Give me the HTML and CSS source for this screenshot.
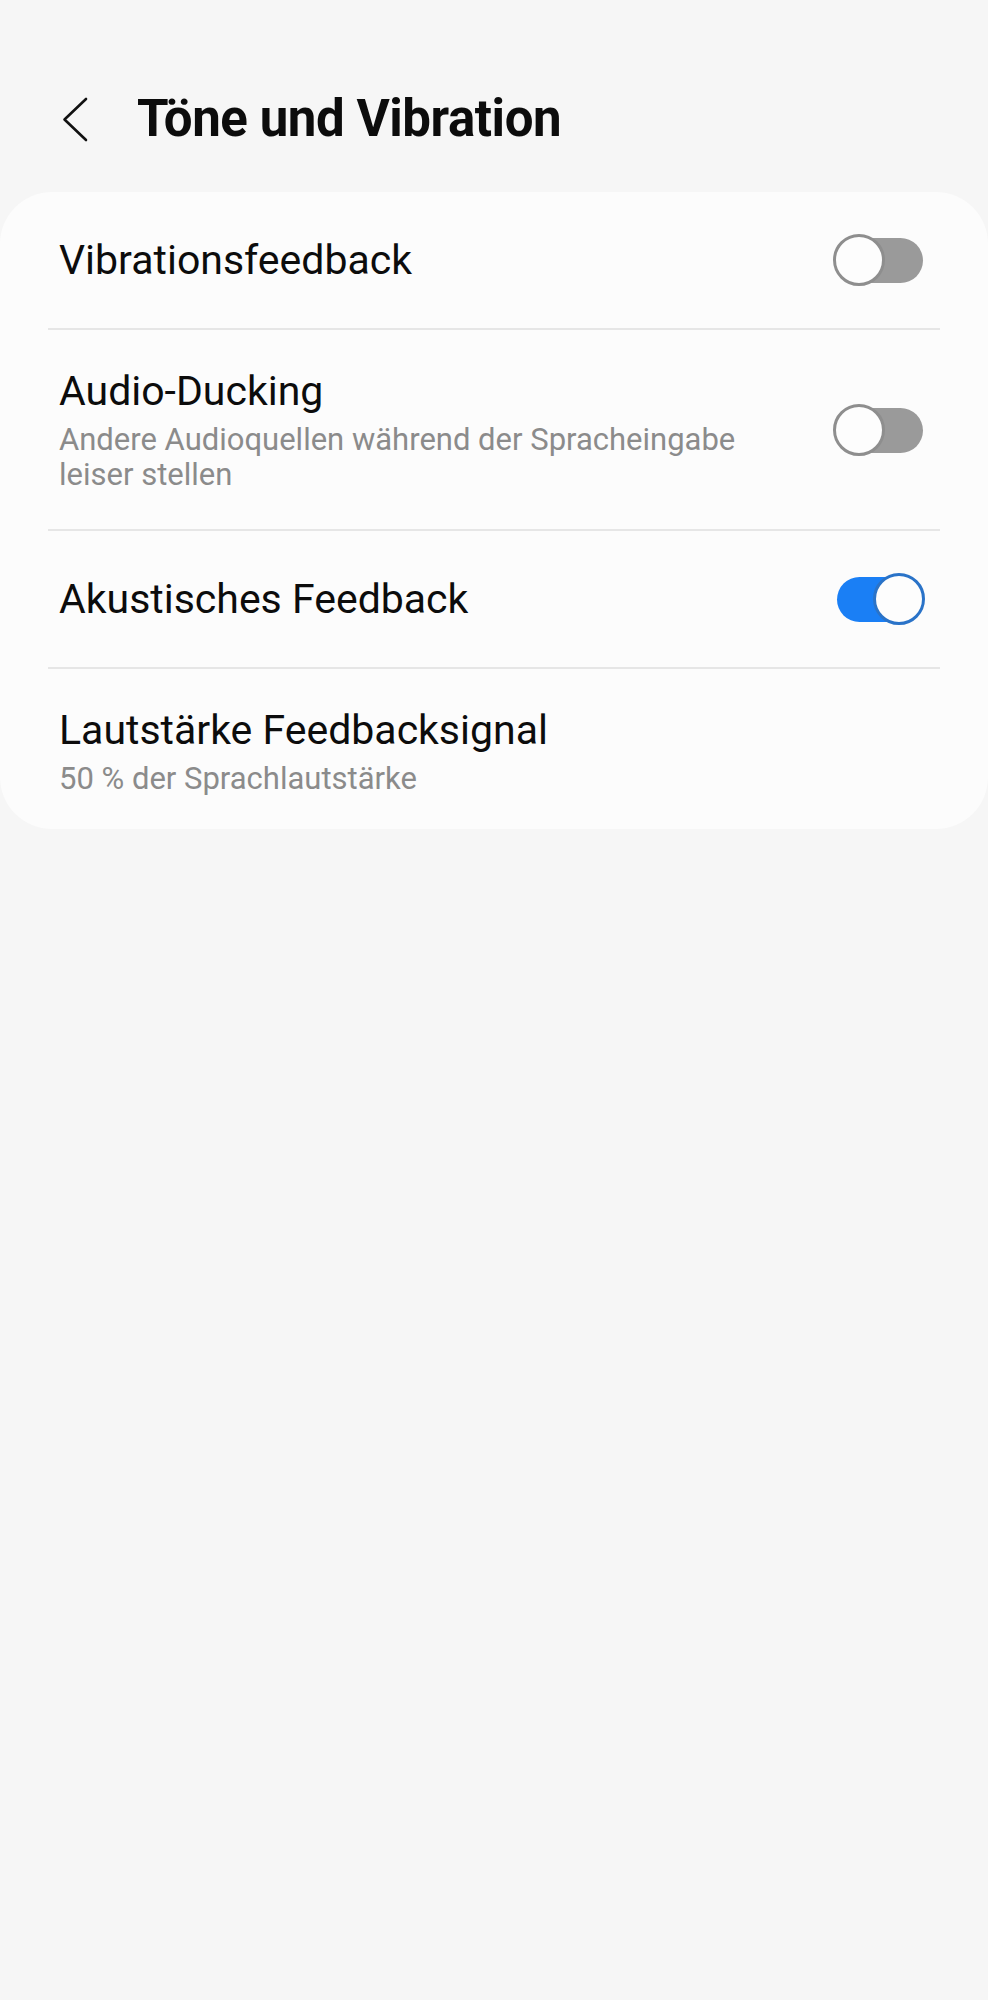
FILE: index.html
```html
<!DOCTYPE html>
<html lang="de">
<head>
    <meta charset="UTF-8">
    <meta name="viewport" content="width=device-width, initial-scale=1.0">
    <title>Töne und Vibration</title>
    <link rel="stylesheet" href="styles.css">
</head>
<body>

    <!-- App bar -->
    <header class="app-bar">
        <button class="back-btn" aria-label="Zurück">
            <svg width="27" height="45" viewBox="0 0 27 45">
                <polyline points="24,2 2.5,22.5 24,43" fill="none" stroke="#111" stroke-width="2.6" stroke-linecap="round" stroke-linejoin="round"/>
            </svg>
        </button>
        <h1 class="page-title">Töne und Vibration</h1>
    </header>

    <!-- Settings list -->
    <main class="settings-card">
        <ul class="pref-list">
            <li class="pref-row">
                <div class="pref-text">
                    <div class="pref-title">Vibrationsfeedback</div>
                </div>
                <label class="switch">
                    <input type="checkbox">
                    <span class="slider"></span>
                </label>
            </li>
            <li class="pref-row">
                <div class="pref-text">
                    <div class="pref-title">Audio-Ducking</div>
                    <div class="pref-summary">Andere Audioquellen während der Spracheingabe leiser stellen</div>
                </div>
                <label class="switch">
                    <input type="checkbox">
                    <span class="slider"></span>
                </label>
            </li>
            <li class="pref-row">
                <div class="pref-text">
                    <div class="pref-title">Akustisches Feedback</div>
                </div>
                <label class="switch">
                    <input type="checkbox" checked>
                    <span class="slider"></span>
                </label>
            </li>
            <li class="pref-row">
                <div class="pref-text">
                    <div class="pref-title">Lautstärke Feedbacksignal</div>
                    <div class="pref-summary">50 % der Sprachlautstärke</div>
                </div>
            </li>
        </ul>
    </main>

</body>
</html>
```

FILE: styles.css
```css
body {
    margin: 0;
    background-color: #f6f6f6;
    font-family: Roboto, "Noto Sans", sans-serif;
    color: #0c0c0c;
}

.app-bar {
    display: flex;
    align-items: center;
    padding: 88px 0 42px 62px;
}

.back-btn {
    display: flex;
    background: none;
    border: none;
    padding: 0;
    margin-right: 48px;
    cursor: pointer;
}

.page-title {
    margin: 0;
    font-size: 51px;
    font-weight: 700;
    line-height: 62px;
    letter-spacing: -0.45px;
}

.settings-card {
    background: #fcfcfc;
    border-radius: 52px;
}

.pref-list {
    list-style: none;
    margin: 0;
    padding: 0 48px;
}

.pref-row {
    display: flex;
    align-items: center;
    box-sizing: border-box;
    min-height: 138px;
    padding: 37px 16px 37px 11px;
    border-bottom: 2px solid #e6e6e6;
}

.pref-row:last-child {
    border-bottom: none;
    padding-bottom: 33px;
}

.pref-text {
    flex: 1;
    margin-right: 60px;
}

.pref-title {
    font-size: 41px;
    line-height: 49px;
}

.pref-summary {
    margin-top: 6px;
    font-size: 31px;
    line-height: 35px;
    color: #8b8b8b;
}

/* toggle switch */
.switch {
    position: relative;
    flex: none;
    width: 91px;
    height: 52px;
}

.switch input { display: none; }

.slider {
    position: absolute;
    left: 4px;
    right: 1px;
    top: 4px;
    bottom: 3px;
    background: #9a9a9a;
    border-radius: 23px;
}

.slider::before {
    content: "";
    position: absolute;
    left: -4px;
    top: -4px;
    width: 52px;
    height: 52px;
    box-sizing: border-box;
    border-radius: 50%;
    background: #fdfdfd;
    border: 3px solid #8e8e8e;
}

.switch input:checked + .slider { background: #1a7ff5; }

.switch input:checked + .slider::before {
    left: 36px;
    border-color: #2a73c8;
}
```
